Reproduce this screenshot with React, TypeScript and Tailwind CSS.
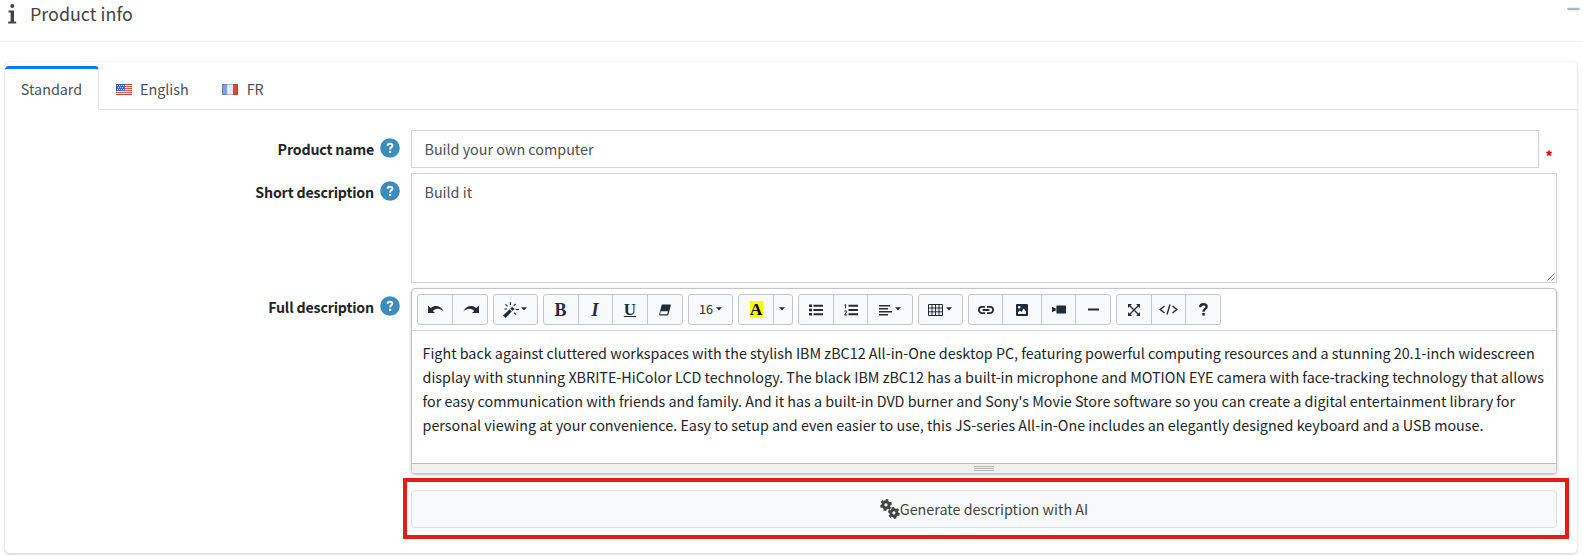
import React from "react";
import { FaMinus } from "react-icons/fa";

const FONT = "font-['Noto_Sans_CJK_SC',sans-serif]";

function Group({ children }: { children: React.ReactNode }) {
  return (
    <div className="flex h-[31px] divide-x divide-[#c4c6c8] overflow-hidden rounded-[3px] border border-[#c4c6c8] bg-[#f8f9fa]">
      {children}
    </div>
  );
}

function Btn({ w, children }: { w: string; children: React.ReactNode }) {
  return (
    <button className={`flex h-full items-center justify-center text-[#212b3a] ${w}`}>{children}</button>
  );
}

function Caret({ className = "ml-[2px]" }: { className?: string }) {
  return (
    <svg className={`mb-[2px] ${className}`} width="6" height="4" viewBox="0 0 6 4">
      <path d="M0 0.3H6L3 3.5Z" fill="#212b3a" />
    </svg>
  );
}

function Icon({ children, w = 16, h = 16, className = "" }: { children: React.ReactNode; w?: number; h?: number; className?: string }) {
  return (
    <svg className={className} width={w} height={h} viewBox={`0 0 ${w} ${h}`} fill="#212b3a">
      {children}
    </svg>
  );
}

function Gear({ x, y, turn }: { x: number; y: number; turn: number }) {
  return (
    <g transform={`translate(${x} ${y}) rotate(${turn})`} stroke="#444" fill="none">
      <circle r="3.1" strokeWidth="3" />
      <path d="M0-4V-5.9M0 4V5.9M3.46-2L5.1-2.95M-3.46 2L-5.1 2.95M-3.46-2L-5.1-2.95M3.46 2L5.1 2.95" strokeWidth="2.8" />
    </g>
  );
}

function Toolbar() {
  return (
    <div className="flex h-[42px] shrink-0 gap-[5px] border-b border-[#d5d7d9] pt-[5px] pl-[5px]">
      <Group>
        <Btn w="w-[35px]">
          <Icon className="mb-[2px] ml-[2px]">
            <path d="M0 4.5V12H7L4.8 10C8 6.9 12.5 7.3 15.6 10.4C13.6 5 7 3.2 2.7 7Z" />
          </Icon>
        </Btn>
        <Btn w="w-[34px]">
          <Icon className="mb-[2px] ml-[2px]">
            <path d="M16 4.5V12H9L11.2 10C8 6.9 3.5 7.3 0.4 10.4C2.4 5 9 3.2 13.3 7Z" />
          </Icon>
        </Btn>
      </Group>
      <Group>
        <Btn w="w-[43px]">
          <Icon className="-ml-[2px]">
            <path d="M0 13.4L6.6 7.2L8.8 9.6L2.6 16Z" />
            <path d="M7.3 6.5L9.2 4.7L11.5 7L9.5 8.9Z" />
            <path d="M7.4 0.2V3M2.4 2.4L4.6 4.4M12.6 2L10.8 3.8M12.6 7.5H16M11 10.6L13 12.6M1.4 7H4" stroke="#212b3a" strokeWidth="1.2" />
          </Icon>
          <Caret className="ml-[2px]" />
        </Btn>
      </Group>
      <Group>
        <Btn w="w-[35px]">
          <span className="mr-px font-['Liberation_Serif',serif] text-[18px] leading-none font-bold">B</span>
        </Btn>
        <Btn w="w-[34px]">
          <span className="mr-px font-['Liberation_Serif',serif] text-[18px] leading-none font-bold italic">I</span>
        </Btn>
        <Btn w="w-[35px]">
          <span className="font-['Liberation_Serif',serif] text-[17px] leading-none font-bold underline">U</span>
        </Btn>
        <Btn w="w-[34px]">
          <Icon w={12} h={12}>
            <path fillRule="evenodd" d="M3.4 0.6H11.2Q12 0.6 11.8 1.4L9.4 10.6Q9.2 11.4 8.4 11.4H0.8Q0 11.4 0.2 10.6L2.5 1.4Q2.7 0.6 3.4 0.6ZM1.8 7.2L1.1 10.2H8.2L9 7.2Z" />
          </Icon>
        </Btn>
      </Group>
      <Group>
        <Btn w="w-[43px]">
          <span className="text-[12.6px] leading-none">16</span>
          <Caret className="ml-[3px]" />
        </Btn>
      </Group>
      <Group>
        <Btn w="w-[35px]">
          <span className="flex h-[17px] w-[13px] items-center justify-center bg-[#ffff00] font-['Liberation_Serif',serif] text-[17.5px] leading-none font-bold text-black">
            A
          </span>
        </Btn>
        <Btn w="w-[18px]">
          <Caret className="mr-[2px]" />
        </Btn>
      </Group>
      <Group>
        <Btn w="w-[35px]">
          <Icon w={14} h={12}>
            <path d="M0 0.5H3V3H0ZM0 4.8H3V7.2H0ZM0 9H3V11.5H0ZM4.5 0.8H14V2.7H4.5ZM4.5 5H14V7H4.5ZM4.5 9.3H14V11.2H4.5Z" />
          </Icon>
        </Btn>
        <Btn w="w-[34px]">
          <Icon w={14} h={12}>
            <path d="M4.5 0.8H14V2.7H4.5ZM4.5 5H14V7H4.5ZM4.5 9.3H14V11.2H4.5Z" />
            <path d="M0.4 1.2L1.6 0.4V4.4M0.4 7.3Q2.8 6 2.7 7.8L0.5 11H3.2" fill="none" stroke="#212b3a" strokeWidth="1" />
          </Icon>
        </Btn>
        <Btn w="w-[44px]">
          <Icon w={13} h={12}>
            <path d="M0 1H11V2.5H0ZM0 4.1H9V5.6H0ZM0 7.1H13V8.6H0ZM0 10.1H9V11.6H0Z" />
          </Icon>
          <Caret className="ml-[3px]" />
        </Btn>
      </Group>
      <Group>
        <Btn w="w-[43px]">
          <Icon w={15} h={12} className="-ml-[2px]">
            <path d="M0.5 0.5H14.5V11.5H0.5ZM0.5 4H14.5M0.5 7.8H14.5M4 0.5V11.5M7.5 0.5V11.5M11 0.5V11.5" fill="none" stroke="#212b3a" />
          </Icon>
          <Caret className="ml-[3px]" />
        </Btn>
      </Group>
      <Group>
        <Btn w="w-[34px]">
          <Icon w={16} h={10}>
            <path d="M7 1.9H4A3.1 3.1 0 0 0 4 8.1H7M9 1.9H12A3.1 3.1 0 0 1 12 8.1H9M4.6 5H11.4" fill="none" stroke="#212b3a" strokeWidth="1.8" />
          </Icon>
        </Btn>
        <Btn w="w-[39px]">
          <Icon w={12} h={12}>
            <path fillRule="evenodd" d="M1 0H11Q12 0 12 1V11Q12 12 11 12H1Q0 12 0 11V1Q0 0 1 0ZM2 10H10V7.5L7.7 4.5L5.4 8L3.8 6.5L2 8.4ZM3.2 2A1.3 1.3 0 1 0 3.2 4.6A1.3 1.3 0 1 0 3.2 2Z" />
          </Icon>
        </Btn>
        <Btn w="w-[34px]">
          <Icon w={14} h={9}>
            <path d="M5 0.5H13.4Q14 0.5 14 1.2V7.8Q14 8.5 13.4 8.5H5Q4.4 8.5 4.4 7.8V1.2Q4.4 0.5 5 0.5ZM0 1.8L3.8 3.5V5.6L0 7.3Z" />
          </Icon>
        </Btn>
        <Btn w="w-[34px]">
          <Icon w={11} h={3}>
            <path d="M0 0.5H11V2.5H0Z" />
          </Icon>
        </Btn>
      </Group>
      <Group>
        <Btn w="w-[35px]">
          <Icon w={12} h={12}>
            <path d="M0 0H4L0 4ZM12 0V4L8 0ZM0 12V8L4 12ZM12 12H8L12 8Z" />
            <path d="M1.5 1.5L10.5 10.5M10.5 1.5L1.5 10.5" stroke="#212b3a" strokeWidth="1.3" />
          </Icon>
        </Btn>
        <Btn w="w-[34px]">
          <Icon w={19} h={11}>
            <path d="M5.5 2L1.2 5.5L5.5 9M13.5 2L17.8 5.5L13.5 9M11 0.5L8 10.5" fill="none" stroke="#212b3a" strokeWidth="1.4" />
          </Icon>
        </Btn>
        <Btn w="w-[34px]">
          <Icon w={9} h={13}>
            <path d="M1.2 4.2Q1.4 1.2 4.4 1.2Q7.6 1.2 7.6 3.7Q7.6 5 6 6Q4.5 7 4.5 8.8" fill="none" stroke="#212b3a" strokeWidth="2.4" />
            <path d="M3.2 10.1H5.8V12.6H3.2Z" />
          </Icon>
        </Btn>
      </Group>
    </div>
  );
}

function Label({ text }: { text: string }) {
  return (
    <div className="-ml-[5px] flex h-[38px] w-[400px] shrink-0 justify-end">
      <span className="mr-[6px] pt-[7px] text-[14.2px] leading-[24px] font-bold tracking-[-0.17px] whitespace-nowrap text-[#212529]">
        {text}
      </span>
      <svg className="mt-[8px]" width="20" height="20" viewBox="0 0 20 20">
        <circle cx="10" cy="10" r="9.8" fill="#3c8dbc" />
        <path d="M7.6 7.8Q7.7 5.7 10 5.7Q12.4 5.7 12.4 7.6Q12.4 8.7 11.2 9.4Q10.1 10.1 10.1 11.4" fill="none" stroke="#fff" strokeWidth="1.9" />
        <path d="M9 12.8H11.2V14.9H9Z" fill="#fff" />
      </svg>
    </div>
  );
}

const LINES = [
  "Fight back against cluttered workspaces with the stylish IBM zBC12 All-in-One desktop PC, featuring powerful computing resources and a stunning 20.1-inch widescreen",
  "display with stunning XBRITE-HiColor LCD technology. The black IBM zBC12 has a built-in microphone and MOTION EYE camera with face-tracking technology that allows",
  "for easy communication with friends and family. And it has a built-in DVD burner and Sony's Movie Store software so you can create a digital entertainment library for",
  "personal viewing at your convenience. Easy to setup and even easier to use, this JS-series All-in-One includes an elegantly designed keyboard and a USB mouse.",
];

export default function App() {
  return (
    <div className={`h-[556px] w-[1583px] overflow-hidden bg-white text-[14.33px] text-[#212529] ${FONT}`}>
      <header className="flex h-[42px] items-start border-b border-[#f0f1f2] pr-[3px] pl-[8px] text-[#444]">
        <svg className="mt-[4px]" width="9" height="20" viewBox="0 0 9 20" fill="#444">
          <circle cx="4.3" cy="2" r="2" />
          <path d="M0.5 6.5H6V17.5H8.2V19.5H0.2V17.5H2.6V8.5H0.5Z" />
        </svg>
        <h1 className="mt-px ml-[13px] flex-1 text-[17.9px] leading-[24px]">Product info</h1>
        <FaMinus className="mt-[2px] h-[14px] w-[13px] text-[#adb5bd]" />
      </header>

      <main className="mt-[20px] ml-[5px] h-[491px] w-[1572px] rounded-[4px] pt-[4px] shadow-[0_0_1px_rgba(0,0,0,0.125),0_1px_3px_rgba(0,0,0,0.2)]">
        <nav className="flex h-[44px] text-[#495057]">
          <div className="flex w-[94px] justify-center rounded-t-[4px] border-t-3 border-r border-t-[#007bff] border-r-[#dee2e6] pt-[8px] leading-[24px]">
            Standard
          </div>
          <div className="flex flex-1 border-b border-[#dee2e6] pt-[11px] pl-[17px] leading-[24px]">
            <svg className="mt-[7px]" width="16" height="11" viewBox="0 0 16 11">
              <rect width="16" height="11" fill="#f7efed" />
              <path d="M0 0.5H16M0 2.5H16M0 4.5H16M0 6.5H16M0 8.5H16M0 10.5H16" stroke="#e0524a" />
              <rect width="9" height="7" fill="#4565c8" />
              <path d="M1 1.5H8M2 3.5H8M1 5.5H8" stroke="#d8e0f8" strokeDasharray="1 1" />
              <rect x="0.5" y="0.5" width="15" height="10" fill="none" stroke="#444" strokeOpacity="0.25" />
            </svg>
            <span className="ml-[8px]">English</span>
            <svg className="mt-[7px] ml-[33px]" width="16" height="11" viewBox="0 0 16 11">
              <rect width="16" height="11" fill="#e6e8ec" />
              <rect width="5" height="11" fill="#7f9fe0" />
              <rect x="11" width="5" height="11" fill="#e0443c" />
              <rect x="0.5" y="0.5" width="15" height="10" fill="none" stroke="#334" strokeOpacity="0.25" />
            </svg>
            <span className="ml-[9px]">FR</span>
          </div>
        </nav>

        <section className="flex h-[42px] pt-[20px]">
          <Label text="Product name" />
          <div className="ml-[11px] flex h-[38px] w-[1128px] shrink-0 items-center border border-[#ced4da] pl-[12.5px] text-[#495057]">
            Build your own computer
          </div>
          <svg className="mt-[20px] ml-[7px]" width="6" height="6" viewBox="0 0 6 6">
            <path d="M3 0L3.8 1.9L6 2.1L4.4 3.5L5 5.8L3 4.7L1 5.8L1.6 3.5L0 2.1L2.2 1.9Z" fill="#f00" stroke="#f00" strokeWidth="0.5" />
          </svg>
        </section>

        <section className="mt-[21px] flex h-[110px]">
          <Label text="Short description" />
          <div className="ml-[11px] flex w-[1146px] border border-[#ced4da] pl-[12.5px] text-[#495057]">
            <span className="flex-1 pt-[6px] leading-[24px]">Build it</span>
            <svg className="mr-px mb-px self-end" width="8" height="8" viewBox="0 0 8 8">
              <path d="M0.5 7.5L7.5 0.5M4.5 7.5L7.5 4.5" stroke="#555" strokeWidth="0.8" />
            </svg>
          </div>
        </section>

        <section className="mt-[5px] flex h-[186px]">
          <Label text="Full description" />
          <div className="ml-[11px] flex w-[1146px] flex-col overflow-hidden rounded-[4px] border border-[#c3c5c7] shadow-[0_1px_3px_rgba(0,0,0,0.25)]">
            <Toolbar />
            <div className="flex-1 pt-[10px] pl-[10.5px]">
              {LINES.map((l) => (
                <p key={l} className="h-[24px] leading-[24px] whitespace-nowrap">
                  {l}
                </p>
              ))}
            </div>
            <div className="flex h-[10px] shrink-0 flex-col items-center gap-px border-t border-[#bbb] bg-[#f0f0f0] pt-[2px]">
              <i className="h-px w-[20px] bg-[#b5b5b5]" />
              <i className="h-px w-[20px] bg-[#b5b5b5]" />
              <i className="h-px w-[20px] bg-[#b5b5b5]" />
            </div>
          </div>
        </section>

        <section className="mt-[4px] ml-[398px] h-[61px] w-[1166px] border-4 border-[#e81b1b] pt-[8px] pl-[4px]">
          <button className="flex h-[38px] w-[1146px] items-center justify-center rounded-[4px] border border-[#ddd] bg-[#f8f9fa] text-[#444]">
            <svg width="20" height="20" viewBox="0 0 20 20">
              <Gear x={6} y={5.9} turn={12} />
              <Gear x={13.9} y={13.9} turn={-12} />
            </svg>
            <span>Generate description with AI</span>
          </button>
        </section>
      </main>
    </div>
  );
}
